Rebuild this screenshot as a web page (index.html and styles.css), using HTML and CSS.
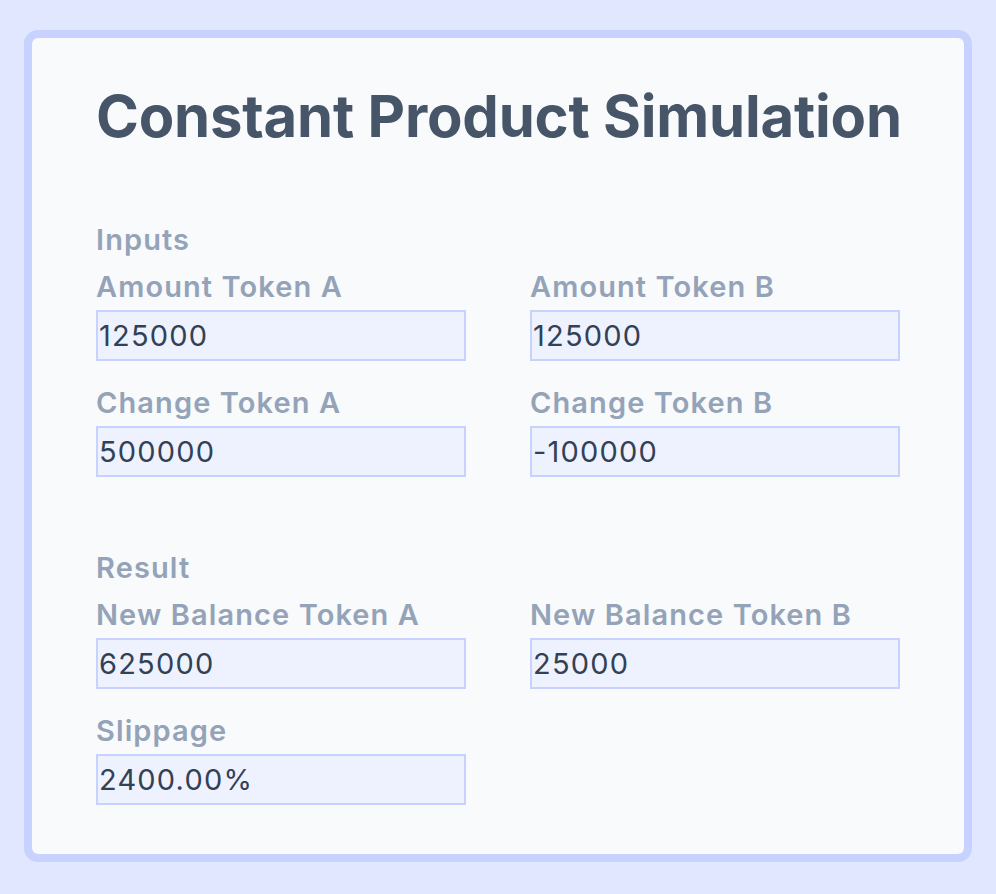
FILE: index.html
```html
<!DOCTYPE html>
<html>
<head>
<meta charset="utf-8">
<link rel="stylesheet" href="styles.css">
</head>
<body>
<div class="card">
  <h1 class="title">Constant Product Simulation</h1>
  <section class="section inputs">
    <div class="heading">Inputs</div>
    <div class="grid">
      <div class="field"><label class="label">Amount Token A</label><div class="box">125000</div></div>
      <div class="field"><label class="label">Amount Token B</label><div class="box">125000</div></div>
      <div class="field"><label class="label">Change Token A</label><div class="box">500000</div></div>
      <div class="field"><label class="label">Change Token B</label><div class="box">-100000</div></div>
    </div>
  </section>
  <section class="section result">
    <div class="heading">Result</div>
    <div class="grid">
      <div class="field"><label class="label">New Balance Token A</label><div class="box">625000</div></div>
      <div class="field"><label class="label">New Balance Token B</label><div class="box">25000</div></div>
      <div class="field"><label class="label">Slippage</label><div class="box">2400.00%</div></div>
    </div>
  </section>
</div>
</body>
</html>
```
FILE: styles.css
```css
html, body {
  margin: 0;
  padding: 0;
}
body {
  background: #e0e7ff;
  font-family: Inter, "Noto Sans", sans-serif;
  width: 996px;
  height: 894px;
  padding: 30px 24px 0 24px;
  box-sizing: border-box;
}
.card {
  width: 948px;
  height: 832px;
  box-sizing: border-box;
  border: 8px solid #c7d2fe;
  border-radius: 14px;
  background: #f8fafc;
  padding: 44px 64px 0 64px;
}
.title {
  margin: 0;
  font-size: 58px;
  font-weight: 700;
  color: #475569;
  line-height: 68px;
  letter-spacing: -0.2px;
  white-space: nowrap;
}
.section.inputs {
  margin-top: 73px;
}
.section.result {
  margin-top: 74px;
}
.heading, .label {
  display: block;
  font-size: 29px;
  font-weight: 600;
  color: #94a3b8;
  line-height: 34px;
  letter-spacing: 1.1px;
}
.heading {
  margin-bottom: 13px;
}
.grid {
  display: grid;
  grid-template-columns: 370px 370px;
  column-gap: 64px;
  row-gap: 25px;
}
.field {
  display: flex;
  flex-direction: column;
  gap: 6px;
}
.box {
  height: 51px;
  box-sizing: border-box;
  border: 2px solid #c7d2fe;
  background: #eef2ff;
  color: #334155;
  font-size: 29px;
  line-height: 47px;
  padding-left: 1px;
  letter-spacing: 1.2px;
}
```
